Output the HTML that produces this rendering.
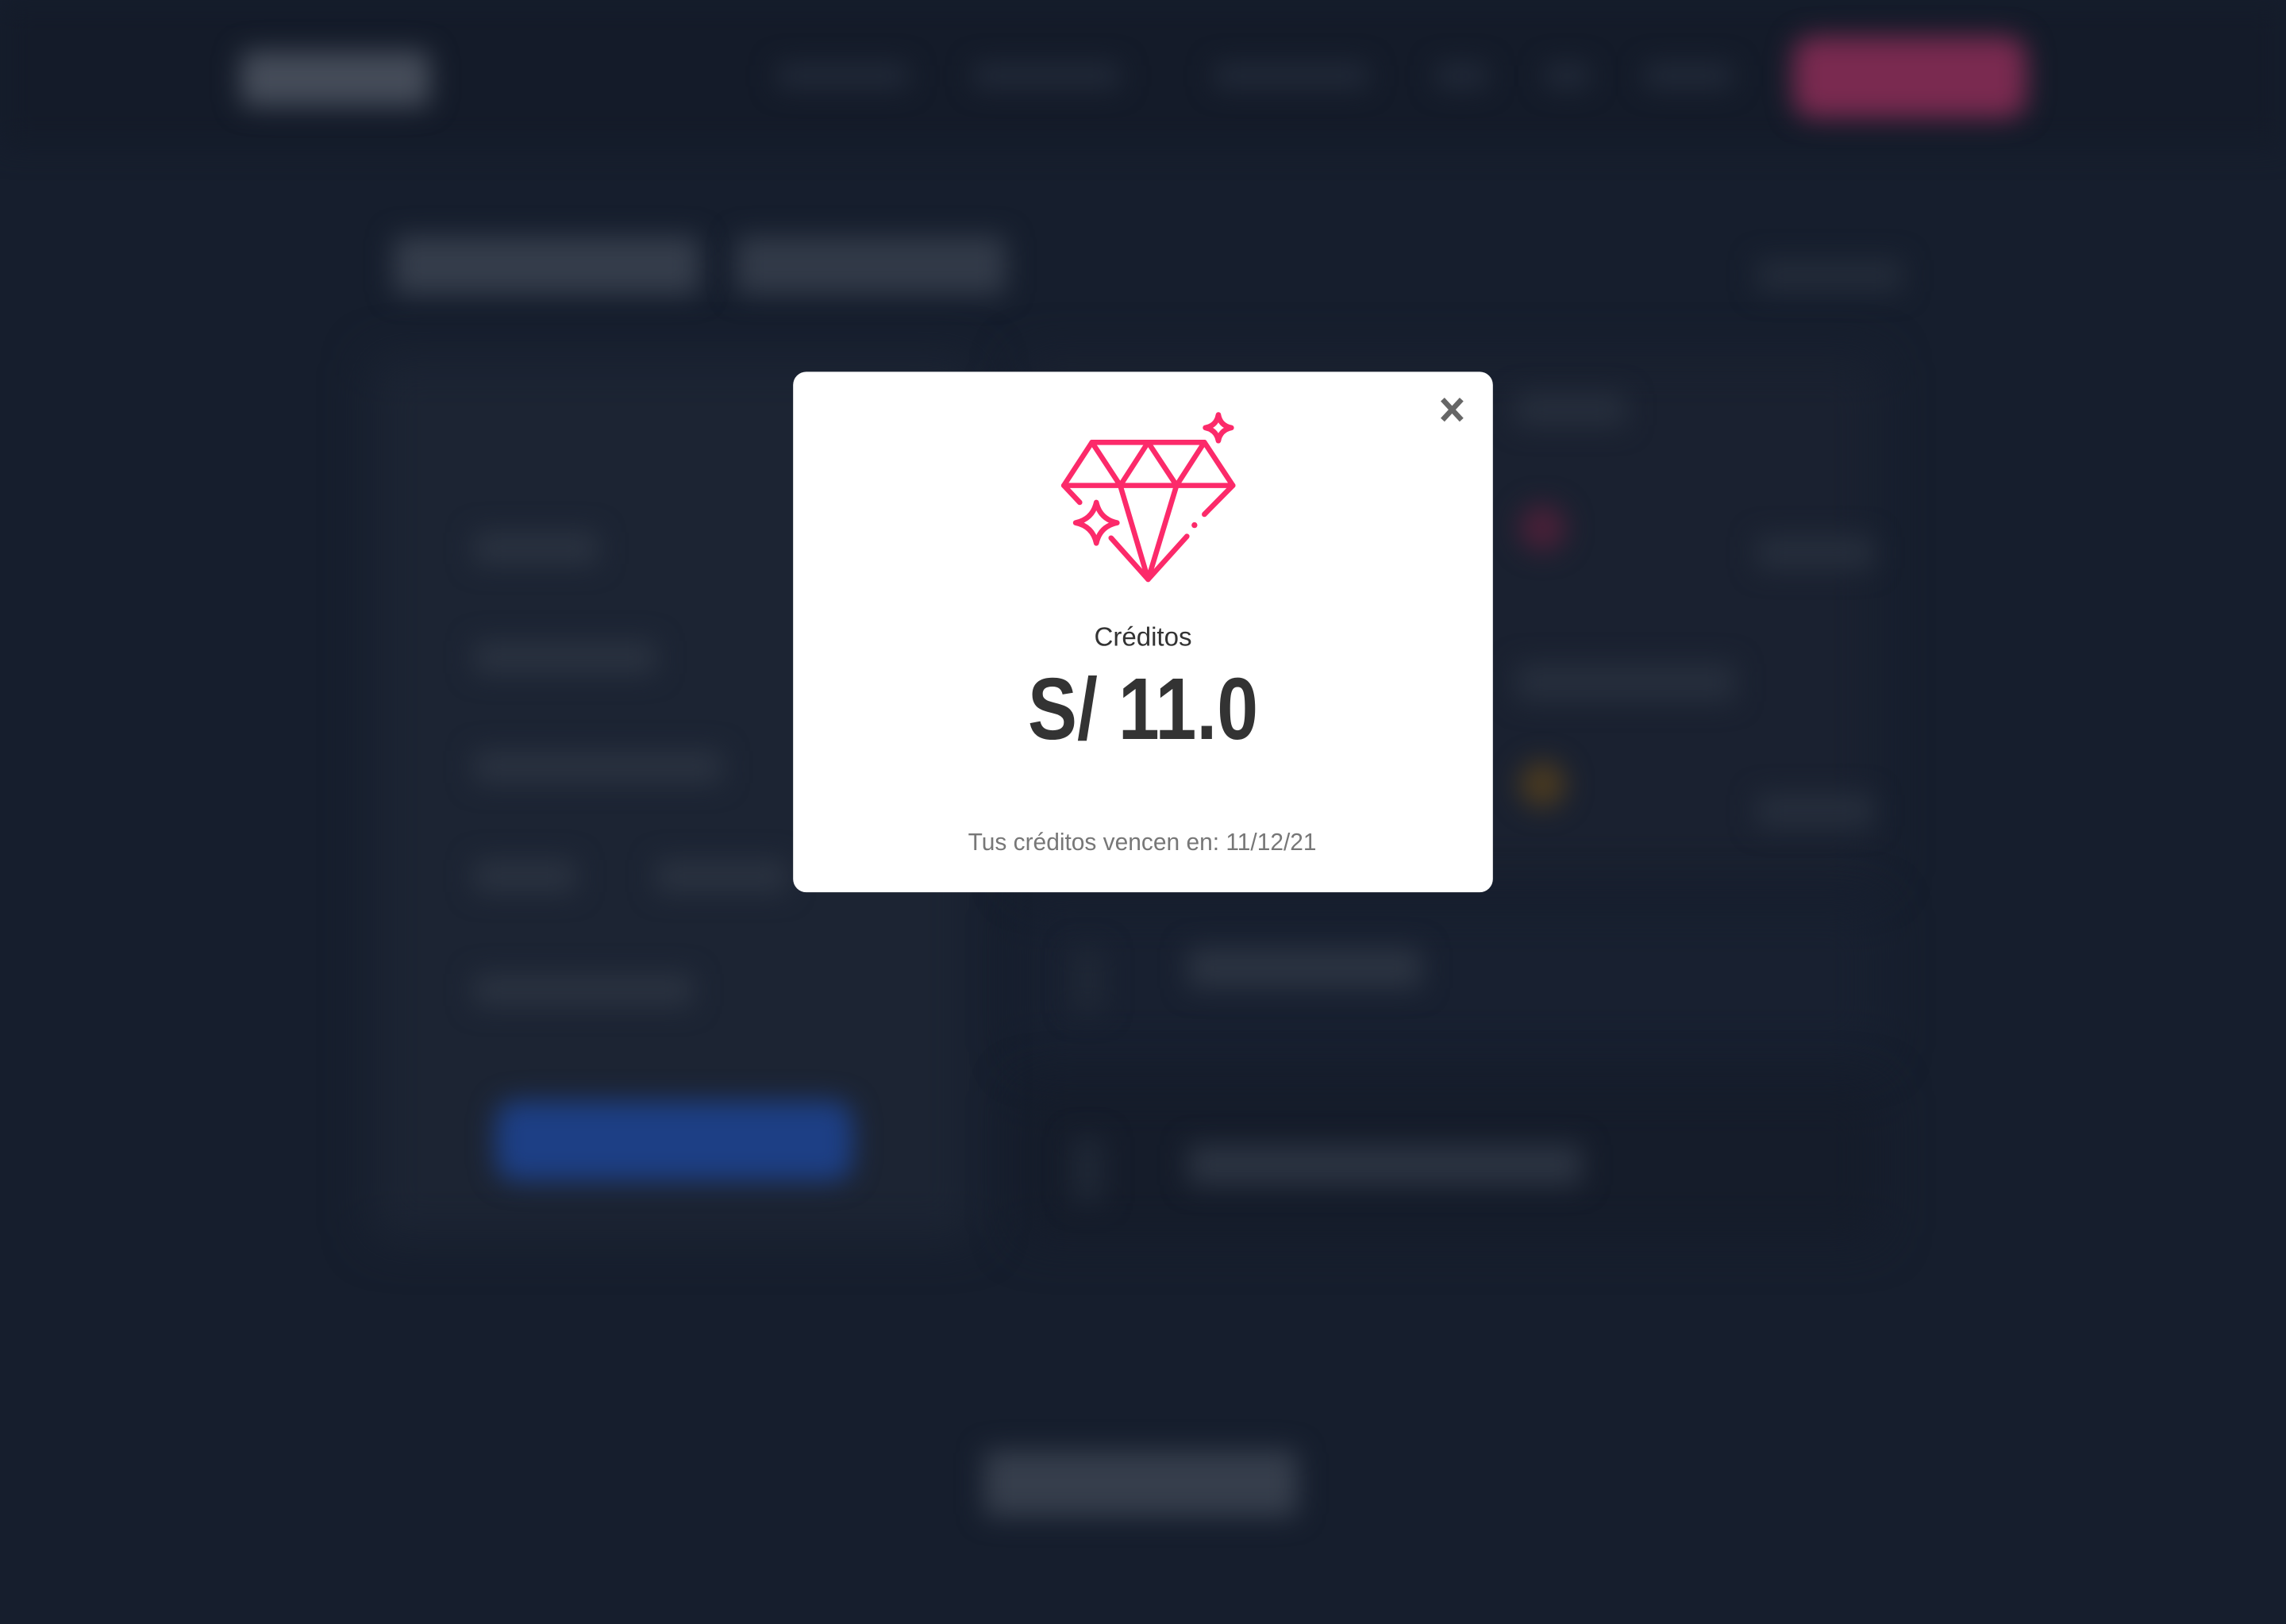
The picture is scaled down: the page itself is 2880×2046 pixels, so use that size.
<!DOCTYPE html>
<html><head><meta charset="utf-8">
<style>
html,body{margin:0;padding:0;background:#161e2d;width:2880px;height:2046px;overflow:hidden}
#w{position:absolute;left:0;top:0;width:1568px;height:1114px;transform:scale(1.83673);transform-origin:0 0;background:#161e2d;overflow:hidden}
#w div{position:absolute}
.bg{filter:blur(9px)}
.bg2{filter:blur(16px)}
svg{position:absolute;left:0;top:0}
</style></head>
<body>
<div id="w">
<div style="left:0;top:0;width:1568px;height:100px;background:#141b29;filter:blur(10px)"></div>
<div class="bg2" style="left:255px;top:245px;width:415px;height:605px;border-radius:10px;background:#1c2433"></div>
<div class="bg2" style="left:700px;top:245px;width:590px;height:360px;border-radius:10px;background:#1a2130"></div>
<div class="bg2" style="left:700px;top:620px;width:590px;height:105px;border-radius:10px;background:#182030"></div>
<div class="bg2" style="left:700px;top:745px;width:590px;height:105px;border-radius:10px;background:#151c2a"></div>

<div class="bg" style="left:165px;top:35px;width:130px;height:38px;border-radius:6px;background:#454c59"></div>
<div class="bg" style="left:533px;top:44px;width:90px;height:16px;background:#222a39"></div>
<div class="bg" style="left:668px;top:44px;width:100px;height:16px;background:#222a39"></div>
<div class="bg" style="left:833px;top:44px;width:105px;height:16px;background:#222a39"></div>
<div class="bg" style="left:985px;top:44px;width:35px;height:16px;background:#222a39"></div>
<div class="bg" style="left:1060px;top:44px;width:30px;height:16px;background:#222a39"></div>
<div class="bg" style="left:1128px;top:44px;width:60px;height:16px;background:#222a39"></div>
<div class="bg" style="left:1230px;top:25px;width:160px;height:56px;border-radius:14px;background:#7a2a50"></div>
<div class="bg" style="left:270px;top:162px;width:210px;height:40px;border-radius:4px;background:#353d4b"></div>
<div class="bg" style="left:505px;top:162px;width:185px;height:40px;border-radius:4px;background:#323a48"></div>
<div class="bg" style="left:1205px;top:178px;width:100px;height:22px;background:#232b39"></div>
<div class="bg" style="left:325px;top:365px;width:85px;height:22px;background:#2a3240"></div>
<div class="bg" style="left:325px;top:440px;width:125px;height:22px;background:#2a3240"></div>
<div class="bg" style="left:325px;top:515px;width:170px;height:22px;background:#2a3240"></div>
<div class="bg" style="left:325px;top:590px;width:70px;height:22px;background:#2a3240"></div>
<div class="bg" style="left:450px;top:590px;width:90px;height:22px;background:#2a3240"></div>
<div class="bg" style="left:325px;top:668px;width:150px;height:22px;background:#2a3240"></div>
<div class="bg" style="left:340px;top:755px;width:245px;height:55px;border-radius:14px;background:#1d3f85"></div>
<div class="bg" style="left:1040px;top:270px;width:75px;height:22px;background:#262e3c"></div>
<div class="bg" style="left:1042px;top:346px;width:32px;height:32px;border-radius:50%;background:#4a2038"></div>
<div class="bg" style="left:1205px;top:368px;width:80px;height:22px;background:#262e3c"></div>
<div class="bg" style="left:1040px;top:455px;width:150px;height:26px;background:#262e3c"></div>
<div class="bg" style="left:1042px;top:522px;width:32px;height:32px;border-radius:50%;background:#4a3a20"></div>
<div class="bg" style="left:1205px;top:545px;width:80px;height:22px;background:#262e3c"></div>
<div class="bg" style="left:735px;top:650px;width:22px;height:45px;background:#1f2735"></div>
<div class="bg" style="left:815px;top:650px;width:160px;height:28px;background:#2b3341"></div>
<div class="bg" style="left:735px;top:780px;width:22px;height:45px;background:#1f2735"></div>
<div class="bg" style="left:815px;top:785px;width:270px;height:28px;background:#2b3341"></div>
<div class="bg" style="left:675px;top:995px;width:215px;height:45px;border-radius:4px;background:#363e4c"></div>

<svg width="1568" height="1114" viewBox="0 0 1568 1114" xmlns="http://www.w3.org/2000/svg">
<rect x="544" y="255" width="480" height="357" rx="9" fill="#ffffff"/>
<g stroke="#666" stroke-width="3.6">
<line x1="989.5" y1="274" x2="1002.5" y2="288"/>
<line x1="1002.5" y1="274" x2="989.5" y2="288"/>
</g>
<g fill="none" stroke="#fc2a6a" stroke-width="3.6" stroke-linecap="round" stroke-linejoin="round">
<path d="M740.6,344.6 L729.7,333 L749,303.4 L826.1,303.4 L845.6,333 L826.1,352.8"/>
<path d="M729.7,333 L845.6,333"/>
<path d="M749,303.4 L768.4,333 L787.5,303.4 L807,333 L826.1,303.4"/>
<path d="M762.1,369 L787.5,397.4 L814.1,367.9"/>
<path d="M768.4,333 L787.5,397.4 L807,333"/>
<path d="M752,344.6 Q754.5,356 766.2,358.6 Q754.5,361 752,372.6 Q749.5,361 737.8,358.6 Q749.5,356 752,344.6 Z"/>
<path d="M835.7,284.5 Q837,292 844.6,293.4 Q837,295 835.7,302.3 Q834.4,295 826.8,293.4 Q834.4,292 835.7,284.5 Z"/>
</g>
<circle cx="819.3" cy="360.2" r="2" fill="#fc2a6a"/>
<g font-family="Liberation Sans, Arial, sans-serif" text-anchor="middle">
<text x="784" y="443" font-size="18" fill="#333">Créditos</text>
<text x="784" y="507" font-size="60" font-weight="bold" fill="#333" textLength="158" lengthAdjust="spacingAndGlyphs">S/ 11.0</text>
<text x="783.5" y="583" font-size="16.5" fill="#777" textLength="239" lengthAdjust="spacingAndGlyphs">Tus créditos vencen en:  11/12/21</text>
</g>
</svg>
</div>
</body></html>
